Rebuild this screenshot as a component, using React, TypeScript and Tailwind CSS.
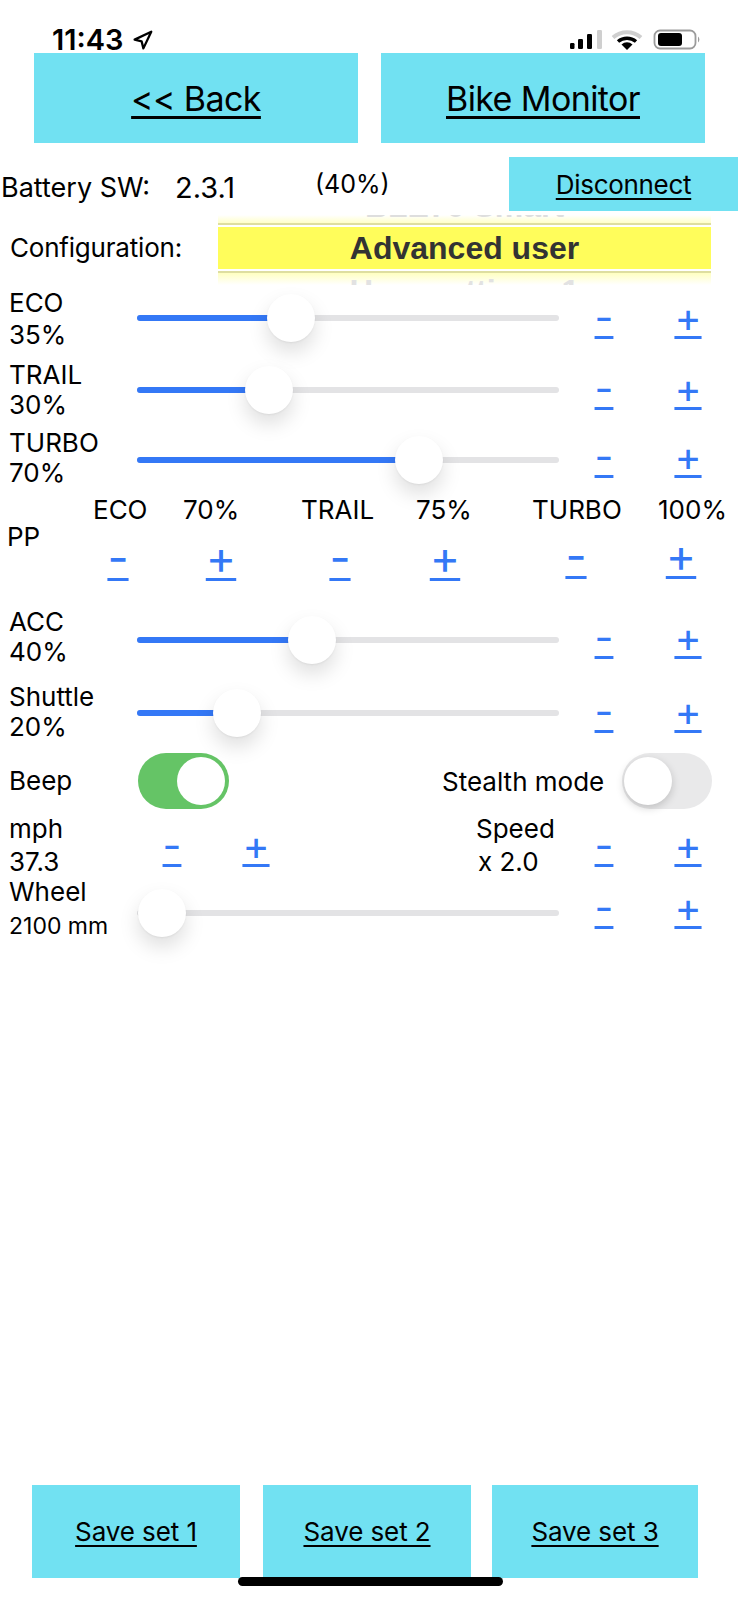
import React from "react";

function Pm({ s, cls = "" }: { s: string; cls?: string }) {
  return (
    <span className={`text-[#3478F6] underline decoration-[3px] underline-offset-[4px] [text-decoration-skip-ink:none] text-center leading-[40px] ${cls}`}>
      {s}
    </span>
  );
}

function PmPair({ cls = "" }: { cls?: string }) {
  return (
    <div className={`flex items-center text-[41px] ${cls}`}>
      <Pm s="-" cls="w-[40px] ml-[25px]" />
      <Pm s="+" cls="w-[40px] ml-[44px]" />
    </div>
  );
}

function Slider({ left, cls = "" }: { left: number; cls?: string }) {
  return (
    <div className={`relative w-[422px] h-[6px] rounded-full bg-[#E3E3E5] shrink-0 ${cls}`}>
      <div className="h-full rounded-l-full bg-[#3478F6]" style={{ width: left > 10 ? left + 10 : 0 }} />
      <div
        className="absolute top-[-21px] w-[48px] h-[48px] rounded-full bg-white shadow-[0_10px_20px_rgba(0,0,0,0.13),0_1px_2px_rgba(0,0,0,0.05)]"
        style={{ left }}
      />
    </div>
  );
}

function Row({
  a,
  b,
  left,
  row,
  line,
  sl = "",
  pm = "",
  small = false,
}: {
  a: string;
  b: string;
  left: number;
  row: string;
  line: string;
  sl?: string;
  pm?: string;
  small?: boolean;
}) {
  return (
    <div className={`flex items-center pl-[9px] ${row}`}>
      <div className={`w-[128px] shrink-0 ${line}`}>
        <div>{a}</div>
        <div className={small ? "text-[23px]" : ""}>{b}</div>
      </div>
      <Slider left={left} cls={sl} />
      <PmPair cls={pm} />
    </div>
  );
}

function SaveBtn({ label, cls }: { label: string; cls: string }) {
  return (
    <div className={`h-[93px] bg-[#71E1F2] flex items-center justify-center text-[26px] tracking-[-0.1px] underline underline-offset-[4px] ${cls}`}>
      {label}
    </div>
  );
}

export default function App() {
  return (
    <div className="relative w-[740px] h-[1600px] bg-white text-black overflow-hidden flex flex-col font-['Inter','Liberation_Sans',sans-serif] text-[26px]">
      {/* status bar */}
      <div className="h-[53px] shrink-0 flex items-start pt-[23px] pl-[52px]">
        <span className="text-[29px] font-semibold leading-[34px]">11:43</span>
        <svg className="ml-[8px] mt-[7px]" width="21" height="21" viewBox="0 0 24 24" fill="none" stroke="black" strokeWidth="2.6" strokeLinejoin="round">
          <polygon points="3 11 22 2 13 21 11 13 3 11" />
        </svg>
        <svg className="ml-[416px] mt-[6px]" width="132" height="24" viewBox="0 0 132 24">
          <rect x="1" y="14" width="4.5" height="6" rx="1.2" fill="#000" />
          <rect x="9" y="10" width="5" height="10" rx="1.2" fill="#000" />
          <rect x="18" y="5" width="5" height="15" rx="1.2" fill="#000" />
          <rect x="28" y="1" width="5" height="19" rx="1.2" fill="#CFCFCF" />
          <path d="M44 8.5 A 21 21 0 0 1 72 8.5" fill="none" stroke="#CFCFCF" strokeWidth="4" />
          <path d="M49 12.5 A 14 14 0 0 1 67 12.5" fill="none" stroke="#000" strokeWidth="3.5" />
          <path d="M58 21 L52.5 15.5 A 8 8 0 0 1 63.5 15.5 Z" fill="#000" />
          <rect x="85.5" y="1.5" width="41" height="18" rx="5.5" fill="none" stroke="#9B9B9B" strokeWidth="1.8" />
          <rect x="89" y="4" width="24" height="13" rx="3" fill="#000" />
          <path d="M129 7.5 A 4 4 0 0 1 129 13.5 Z" fill="#9B9B9B" />
        </svg>
      </div>

      {/* top buttons */}
      <div className="flex pl-[34px] gap-[23px] shrink-0">
        <div className="w-[324px] h-[90px] bg-[#71E1F2] flex items-center justify-center text-[34px] tracking-[-0.6px] underline decoration-[3px] underline-offset-[5px]">&lt;&lt; Back</div>
        <div className="w-[324px] h-[90px] bg-[#71E1F2] flex items-center justify-center text-[34px] tracking-[-0.6px] underline decoration-[3px] underline-offset-[5px]">Bike Monitor</div>
      </div>

      {/* battery row */}
      <div className="flex items-center mt-[14px] h-[54px] pl-[1px] shrink-0">
        <span className="w-[174px] text-[27px] mt-[8px]">Battery SW:</span>
        <span className="w-[140px] text-[29px] mt-[8px]">2.3.1</span>
        <span className="w-[194px] text-[25px] mt-[2px]">(40%)</span>
        <div className="w-[229px] h-[54px] bg-[#71E1F2] flex items-center justify-center underline underline-offset-[4px] text-[26px] tracking-[-0.3px] pt-[1px]">Disconnect</div>
      </div>

      {/* picker */}
      <div className="flex mt-[4px] h-[70px] shrink-0">
        <div className="w-[218px] pl-[10px] h-full flex items-center text-[26px] tracking-[-0.2px] pb-[5px]">Configuration:</div>
        <div className="w-[493px] h-full flex flex-col font-['Liberation_Sans',sans-serif] font-bold text-[32px] text-[#333333]">
          <div className="relative h-[8px] overflow-hidden flex items-end justify-center bg-gradient-to-b from-white to-[#FFFFC8]">
            <span className="leading-[24px] mb-[5px] text-[#DEDEDE]">BLE70 Smart</span>
          </div>
          <div className="h-[2px] bg-[#DEDEA0]" />
          <div className="h-[2px] bg-white" />
          <div className="h-[42px] bg-[#FFFD5B] flex items-center justify-center">Advanced user</div>
          <div className="h-[2px] bg-white" />
          <div className="h-[2px] bg-[#DEDEA0]" />
          <div className="relative flex-1 overflow-hidden flex items-start justify-center bg-gradient-to-b from-[#FFFFC0] to-white">
            <span className="leading-[24px] mt-[6px] text-[#E2E2E2]">User settings 1</span>
          </div>
        </div>
      </div>

      <Row a="ECO" b="35%" left={130} row="mt-[2px] h-[64px]" line="leading-[32px]" sl="-mt-[2px]" pm="-mt-[4px]" />
      <Row a="TRAIL" b="30%" left={108} row="mt-[9px] h-[60px]" line="leading-[30px]" pm="-mt-[4px]" />
      <Row a="TURBO" b="70%" left={258} row="mt-[8px] h-[60px]" line="leading-[30px]" sl="mt-[4px]" pm="-mt-[4px]" />

      {/* PP */}
      <div className="flex pl-[93px] mt-[7px] h-[30px] leading-[30px] shrink-0">
        <span className="w-[90px]">ECO</span>
        <span className="w-[118px]">70%</span>
        <span className="w-[115px]">TRAIL</span>
        <span className="w-[116px]">75%</span>
        <span className="w-[126px]">TURBO</span>
        <span>100%</span>
      </div>
      <div className="relative flex h-[55px] pl-[98px] text-[46px] shrink-0 -mt-[3px]">
        <span className="absolute left-[7px] top-0 text-[26px] leading-[30px]">PP</span>
        <Pm s="-" cls="w-[40px] mt-[15px] h-[45px]" />
        <Pm s="+" cls="w-[40px] mt-[15px] h-[45px] ml-[63px]" />
        <Pm s="-" cls="w-[40px] mt-[15px] h-[45px] ml-[79px]" />
        <Pm s="+" cls="w-[40px] mt-[15px] h-[45px] ml-[65px]" />
        <Pm s="-" cls="w-[40px] mt-[13px] h-[45px] ml-[91px]" />
        <Pm s="+" cls="w-[40px] mt-[13px] h-[45px] ml-[65px]" />
      </div>

      <Row a="ACC" b="40%" left={151} row="mt-[30px] h-[60px]" line="leading-[30px]" sl="mt-[6px]" />
      <Row a="Shuttle" b="20%" left={76} row="mt-[15px] h-[60px]" line="leading-[30px]" sl="mt-[2px]" pm="-mt-[2px]" />

      {/* toggles */}
      <div className="flex items-center mt-[11px] h-[56px] pl-[9px] shrink-0">
        <span className="w-[129px] mt-[-1px]">Beep</span>
        <div className="w-[91px] h-[56px] rounded-full bg-[#65C466] p-[4px] pl-[39px]">
          <div className="w-[48px] h-[48px] rounded-full bg-white" />
        </div>
        <span className="ml-[213px] w-[180px]">Stealth mode</span>
        <div className="w-[90px] h-[56px] rounded-full bg-[#E9E9EA] p-[4px] pl-[2px]">
          <div className="w-[48px] h-[48px] rounded-full bg-white shadow-[0_3px_8px_rgba(0,0,0,0.18)]" />
        </div>
      </div>

      {/* mph */}
      <div className="flex items-center mt-[4px] h-[66px] pl-[9px] shrink-0">
        <div className="w-[118px] leading-[33px] -mt-[2px]">
          <div>mph</div>
          <div>37.3</div>
        </div>
        <PmPair cls="-mt-[2px]" />
        <div className="ml-[200px] leading-[33px] w-[83px] -mt-[2px]">
          <div>Speed</div>
          <div className="pl-[2px]">x 2.0</div>
        </div>
        <PmPair cls="-mt-[2px]" />
      </div>

      <Row a="Wheel" b="2100 mm" left={1} row="mt-[-4px] h-[68px]" line="leading-[34px]" sl="mt-[8px]" pm="-mt-[4px]" small />

      {/* save buttons */}
      <div className="mt-auto mb-[22px] flex pl-[32px] shrink-0">
        <SaveBtn label="Save set 1" cls="w-[208px]" />
        <SaveBtn label="Save set 2" cls="w-[208px] ml-[23px]" />
        <SaveBtn label="Save set 3" cls="w-[206px] ml-[21px]" />
      </div>
      <div className="absolute left-[238px] top-[1577px] w-[265px] h-[9px] rounded-full bg-black" />
    </div>
  );
}
